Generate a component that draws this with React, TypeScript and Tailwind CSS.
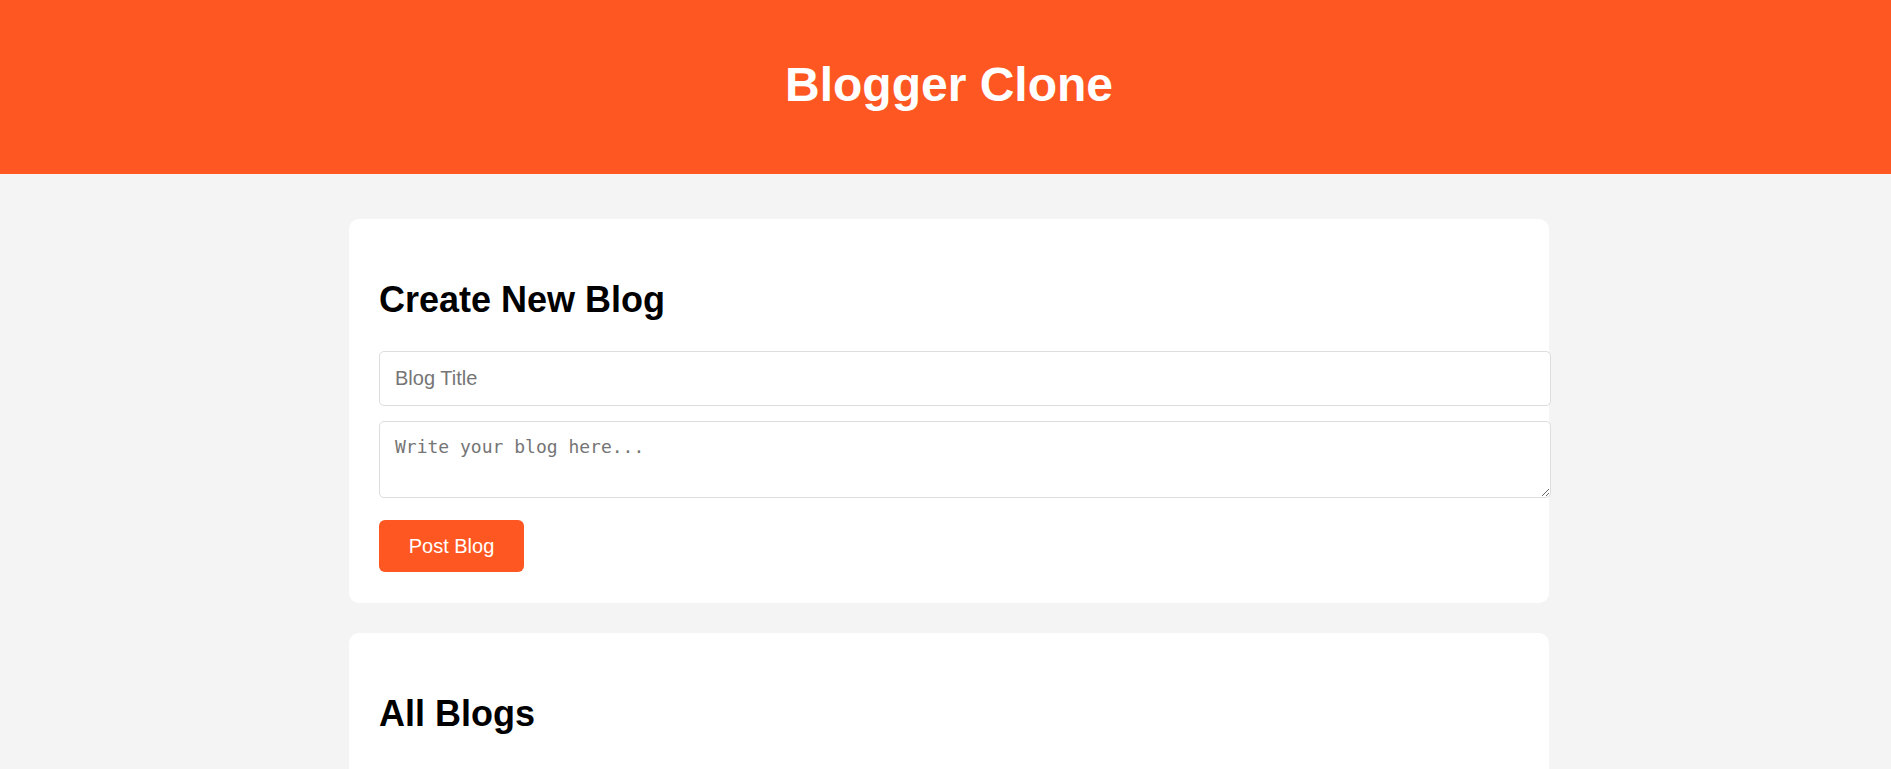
import React from "react";

export default function App() {
  return (
    <div className="min-h-screen bg-[#f4f4f4] font-['Liberation_Sans',Arial,sans-serif] text-black">
      <header className="bg-[#ff5722] pl-[7px] pt-[57px] pb-[62px] text-center">
        <h1 className="text-[48px] font-bold leading-[55px] text-white">Blogger Clone</h1>
      </header>
      <main className="pl-[7px] pt-[45px]">
        <section className="mx-auto mb-[30px] box-border w-[1200px] rounded-[10px] bg-white px-[30px] pt-[30px] pb-[31px]">
          <h2 className="mt-[30px] mb-[31px] text-[36px] font-bold leading-[41px]">Create New Blog</h2>
          <input
            type="text"
            placeholder="Blog Title"
            className="mb-[15px] box-border block h-[55px] w-[1172px] rounded-[5px] border border-[#dddddd] bg-white px-[15px] text-[20px] leading-[23px] outline-none placeholder:text-[#757575]"
          />
          <textarea
            placeholder="Write your blog here..."
            className="mb-[22px] box-border block h-[77px] w-[1172px] rounded-[5px] border border-[#dddddd] bg-white px-[15px] py-[14px] font-['DejaVu_Sans_Mono',monospace] text-[18px] leading-[21px] outline-none placeholder:text-[#757575]"
          />
          <button className="flex h-[52px] w-[145px] items-center justify-center rounded-[6px] bg-[#ff5722] text-[20px] text-white">
            Post Blog
          </button>
        </section>
        <section className="mx-auto box-border w-[1200px] rounded-[10px] bg-white px-[30px] pt-[30px] pb-[30px]">
          <h2 className="mt-[30px] mb-[31px] text-[36px] font-bold leading-[41px]">All Blogs</h2>
          <div className="h-[100px]"></div>
        </section>
      </main>
    </div>
  );
}
